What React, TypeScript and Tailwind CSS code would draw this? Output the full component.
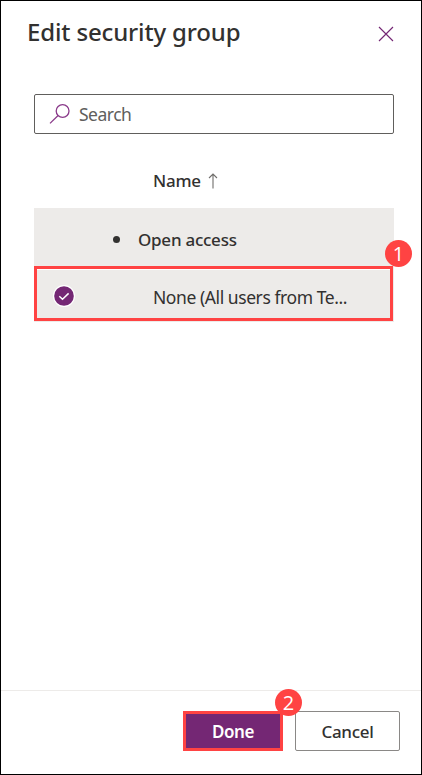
import React from "react";

function Badge({ children, className }: { children: React.ReactNode; className: string }) {
  return (
    <span
      className={`absolute flex h-[27px] w-[27px] items-center justify-center rounded-full bg-[#ff4343] font-['Open_Sans',sans-serif] text-[20px] font-normal leading-none tracking-normal text-white ${className}`}
    >
      {children}
    </span>
  );
}

export default function App() {
  return (
    <div className="flex h-[775px] w-[422px] flex-col border border-black bg-white font-['Noto_Sans','Open_Sans',sans-serif] text-[17px] text-[#323130]">
      <header className="flex h-[93px] items-start justify-between pl-[26px] pr-[27px] pt-[15px]">
        <h1 className="whitespace-nowrap text-[24px] font-medium leading-8 tracking-[-0.15px]">Edit security group</h1>
        <button aria-label="Close" className="mt-[10px]">
          <svg width="17" height="17" viewBox="0 0 17 17" fill="none" stroke="#742774" strokeWidth="1.15">
            <path d="M2 1 16 15M16 1 2 15" />
          </svg>
        </button>
      </header>

      <div className="ml-[33px] flex h-10 w-[360px] items-center rounded-[2px] border border-[#605e5c] pl-[14px]">
        <svg width="22" height="22" viewBox="0 0 22 22" fill="none" stroke="#8a3a8a" strokeWidth="1.3">
          <circle cx="13.6" cy="8" r="6.4" />
          <path d="M9.1 12.5 1 20.4" />
        </svg>
        <span className="ml-[8px] text-[17.5px] tracking-[-0.5px] text-[#605e5c]">Search</span>
      </div>

      <div className="ml-[33px] flex h-[74px] items-center pl-[119px] pt-5">
        <span className="text-[17px] font-medium tracking-[-0.25px]">Name</span>
        <svg className="ml-[7px]" width="10" height="16" viewBox="0 0 10 16" fill="none" stroke="#706e6c" strokeWidth="1.1">
          <path d="M5 15.5V1M1 5l4-4 4 4" />
        </svg>
      </div>

      <div className="ml-[33px] h-[114px] w-[360px] bg-[#edebe9]">
        <div className="flex h-[58px] items-center pl-[79px] pt-[5px]">
          <span className="h-[7px] w-[7px] rounded-full bg-[#323130]" />
          <span className="ml-[18px] text-[17px] font-medium tracking-[-0.25px]">Open access</span>
        </div>
        <div className="relative flex h-[55px] w-[359px] border-[3px] border-[#ff4343]">
          <div className="flex flex-1 items-center border-t border-white pl-[16px] pt-[5px]">
            <svg className="-mt-[2px]" width="22" height="22" viewBox="0 0 22 22">
              <circle cx="11" cy="11" r="11" fill="#fff" />
              <circle cx="11" cy="11" r="9.8" fill="#742774" />
              <path d="M6.3 11.2 9.5 14.2 15.6 8.4" fill="none" stroke="#fff" strokeWidth="1.5" />
            </svg>
            <span className="ml-[78px] whitespace-nowrap pt-[2px] text-[17.5px] tracking-[-0.43px]">None (All users from Te...</span>
          </div>
          <Badge className="-top-[29px] left-[348px]">1</Badge>
        </div>
      </div>

      <div className="flex-1" />

      <footer className="flex h-[84px] items-start border-t border-[#edebe9] pl-[182px] pt-5">
        <button className="relative flex h-10 w-[100px] items-center justify-center border-[3px] border-[#ff4343] bg-[#742774] pt-[2px] text-[17px] font-semibold tracking-[-0.4px] text-white">
          Done
          <Badge className="-top-[25px] left-[89px] z-10">2</Badge>
        </button>
        <button className="ml-3 flex h-10 w-[105px] items-center justify-center rounded-[2px] border border-[#8a8886] pt-[2px] text-[17px] font-medium tracking-[-0.3px]">
          Cancel
        </button>
      </footer>
    </div>
  );
}
